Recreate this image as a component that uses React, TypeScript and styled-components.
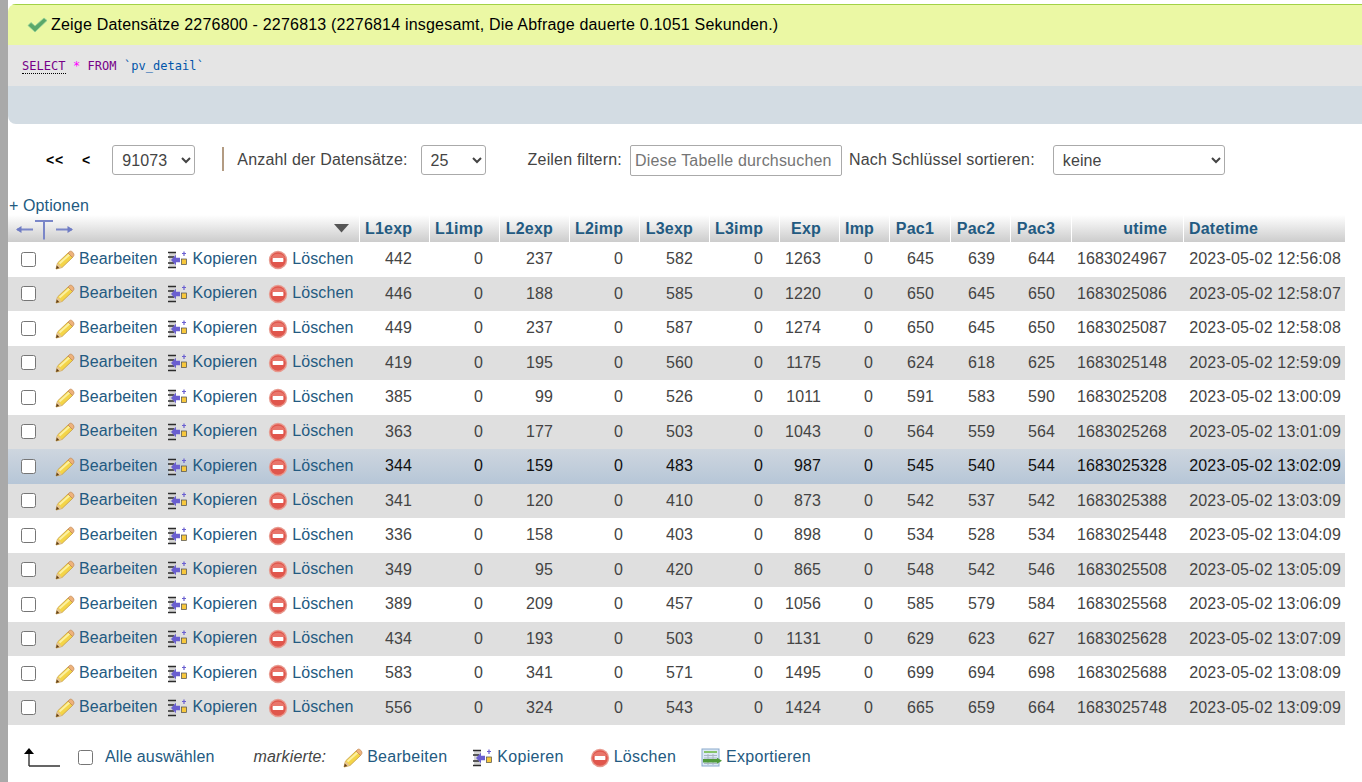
import React from 'react';
import styled, { createGlobalStyle } from 'styled-components';

const Global = createGlobalStyle`
  html, body { margin: 0; padding: 0; background: #fff; }
  body { font-family: "Liberation Sans", Arial, sans-serif; font-size: 16px; color: #444; overflow: hidden; }
`;

const Page = styled.div`
  width: 1362px; height: 782px; box-sizing: border-box; padding-left: 8px;
  background: #fff; position: relative; overflow: hidden;
  &::before { content: ""; position: absolute; left: 0; top: 0; bottom: 0; width: 8px; background: #a9a9a9; }
`;
const Panel = styled.div`
  margin-top: 4px; border-radius: 8px 0 0 8px; overflow: hidden; width: 1354px;
`;
const Success = styled.div`
  height: 40px; background: #ebf8a4; border-top: 1px solid #a2d246;
  display: flex; align-items: center; padding-left: 19px; gap: 3px; font-size: 16px; color: #000; letter-spacing: 0.2px;
`;
const Sql = styled.div`
  height: 41px; background: #e5e5e5; padding: 14px 0 0 14px; box-sizing: border-box;
  font-family: "DejaVu Sans Mono", monospace; font-size: 12px; line-height: 14px; color: #444; letter-spacing: 0.05px;
`;
const Kw = styled.span`color: #708;`;
const Dotted = styled(Kw)`border-bottom: 1px dotted #000;`;
const Star = styled.span`color: #f0f;`;
const Ident = styled.span`color: #05a;`;
const Tools = styled.div`height: 38px; background: #d3dce3;`;

const Nav = styled.div`
  height: 72px; display: flex; align-items: center; color: #444; letter-spacing: 0.18px;
`;
const Pager = styled.span`font-weight: 700; color: #000; font-size: 14px;`;
const First = styled(Pager)`margin-left: 38px; letter-spacing: 0.8px;`;
const Prev = styled(Pager)`margin-left: 18px;`;
const Select = styled.select<{ $w: number; $ml: number }>`
  width: ${p => p.$w}px; margin-left: ${p => p.$ml}px; height: 30px; font: 16px "Liberation Sans", Arial, sans-serif;
  color: #444; background-color: #fff; border: 1px solid #aaa; border-radius: 3px; padding: 0 0 0 5px; box-sizing: border-box;
  letter-spacing: 0.1px;
`;
const Divider = styled.span`width: 2px; height: 24px; background: #b39b82; margin: -3px 0 0 27px;`;
const Label = styled.span<{ $ml: number }>`margin-left: ${p => p.$ml}px; white-space: nowrap;`;
const Search = styled.input`
  width: 212px; height: 31px; margin: 1px 0 0 8px; box-sizing: border-box; padding: 0 4px; border: 1px solid #aaa; border-radius: 2px;
  font: 16px "Liberation Sans", Arial, sans-serif; color: #444; letter-spacing: 0.2px;
  &::placeholder { color: #757575; opacity: 1; }
`;
const Options = styled.div`height: 19px; line-height: 19px; padding-left: 1px; color: #235a81; font-size: 16px; letter-spacing: 0.12px;`;

const Table = styled.table`border-collapse: separate; border-spacing: 0; table-layout: fixed; width: 1337px; font-size: 16px;`;
const Th = styled.th<{ $align: string; $pr: number }>`
  height: 27px; padding: 0 ${p => p.$pr}px 0 5px; box-sizing: border-box; font-weight: 700; font-size: 16px; color: #235a81;
  background: linear-gradient(#fff, #ccc); text-align: ${p => p.$align}; border-left: 1px solid #fff; white-space: nowrap;
  letter-spacing: 0.2px;
`;
const HeadCtl = styled.th`
  height: 27px; padding: 0; background: linear-gradient(#fff, #ccc);
`;
const HeadInner = styled.div`display: flex; justify-content: space-between; align-items: center; padding: 0 10px 0 7px; height: 27px;`;
const Tr = styled.tr<{ $bg: string; $active: boolean }>`
  height: 34.5px; background: ${p => p.$bg}; color: ${p => (p.$active ? '#111' : '#444')};
`;
const Td = styled.td<{ $pr: number }>`
  padding: 0 ${p => p.$pr}px 0 5px; text-align: right; white-space: nowrap; box-sizing: border-box; letter-spacing: 0.1px;
`;
const DateTd = styled(Td)`letter-spacing: 0.17px;`;
const ActionCell = styled.td`padding: 0;`;
const Actions = styled.div`display: flex; align-items: center; height: 34px;`;
const Check = styled.span`
  width: 13px; height: 13px; border: 1px solid #767676; border-radius: 2.5px; background: #fff; display: inline-block; flex: none;
`;
const RowCheck = styled(Check)`margin: 0 19px 0 13px;`;
const Act = styled.span<{ $ml?: number }>`
  display: inline-flex; align-items: center; gap: 4px; color: #235a81; margin-left: ${p => p.$ml ?? 0}px; white-space: nowrap; margin-top: -1px;
  letter-spacing: 0.1px;
`;
const FootAct = styled(Act)`letter-spacing: 0.28px; margin-top: 0;`;
const IconBox = styled.svg`flex: none; display: block; margin-top: 2px;`;

const Foot = styled.div`height: 64px; display: flex; align-items: center; color: #235a81; letter-spacing: 0.14px;`;
const FootCheck = styled(Check)`margin-left: 16px;`;
const Arrow = styled.svg`margin-left: 16px; flex: none;`;
const SelectAll = styled.span`margin-left: 12px;`;
const Marked = styled.em`margin-left: 39px; color: #444;`;

const Pencil = () => (
  <IconBox width="20" height="20" viewBox="0 0 20 20">
    <path d="M1 19 L2.5 13 L13 3 L17.5 7.5 L7 17.5 Z" fill="#f4d548" stroke="#c9a24c" strokeWidth="0.9" />
    <path d="M4.5 13.5 L14.5 4.5" stroke="#fbf0a0" strokeWidth="2" />
    <path d="M13 3 L15 1.3 C16.6 0.4 19.6 3.6 18.8 5.6 L17.5 7.5 Z" fill="#eeb27c" stroke="#c48c54" strokeWidth="0.8" />
    <path d="M1 19 L2.5 13 L7 17.5 Z" fill="#e6c48e" />
    <path d="M1 19 L1.8 15.6 L4.2 18 Z" fill="#5f3d16" />
  </IconBox>
);
const Copy = () => (
  <IconBox width="20" height="20" viewBox="0 0 20 20">
    <rect x="1" y="2" width="7" height="16" fill="#d4d4d4" />
    <path d="M0 2.5 H8 M0 17.5 H8 M0 7 H6 M0 13 H6" stroke="#2c2c2c" strokeWidth="1.4" />
    <path d="M3 10 L8 4.8 V7.8 H12 V12.2 H8 V15.2 Z" fill="#6a5fd0" />
    <rect x="13.5" y="9" width="5" height="5.5" fill="#f8c83c" stroke="#4a4a4a" strokeWidth="0.7" />
    <path d="M16 1.5 V6 M14 3.5 H18" stroke="#6a5fd0" strokeWidth="1.2" />
  </IconBox>
);
const Del = () => (
  <IconBox width="20" height="20" viewBox="0 0 20 20">
    <circle cx="10" cy="10" r="9.2" fill="#e89a8f" />
    <circle cx="10" cy="10" r="7.8" fill="#e0564c" />
    <path d="M3 8 A7.8 7.8 0 0 1 17 8 Z" fill="#e8766b" />
    <rect x="4.6" y="8.1" width="10.8" height="3.8" rx="0.6" fill="#fff" />
  </IconBox>
);
const Exp = () => (
  <IconBox width="21" height="20" viewBox="0 0 21 20">
    <rect x="1" y="1" width="17" height="17" fill="#dce9f6" stroke="#8aa9cc" />
    <rect x="3" y="3" width="13" height="2" fill="#86c46b" />
    <path d="M3 7.5 H16 M3 10 H16 M3 15.5 H16 M7 6 V17 M12 6 V17" stroke="#a9b6c4" strokeWidth="1" />
    <path d="M2 11 H16 V14.5 H2 Z" fill="#4f9a3b" />
    <path d="M16 9.8 L21 12.8 L16 15.8 Z" fill="#4f9a3b" />
  </IconBox>
);

const rows: (string | number)[][] = [
  [442,0,237,0,582,0,1263,0,645,639,644,'1683024967','2023-05-02 12:56:08'],
  [446,0,188,0,585,0,1220,0,650,645,650,'1683025086','2023-05-02 12:58:07'],
  [449,0,237,0,587,0,1274,0,650,645,650,'1683025087','2023-05-02 12:58:08'],
  [419,0,195,0,560,0,1175,0,624,618,625,'1683025148','2023-05-02 12:59:09'],
  [385,0,99,0,526,0,1011,0,591,583,590,'1683025208','2023-05-02 13:00:09'],
  [363,0,177,0,503,0,1043,0,564,559,564,'1683025268','2023-05-02 13:01:09'],
  [344,0,159,0,483,0,987,0,545,540,544,'1683025328','2023-05-02 13:02:09'],
  [341,0,120,0,410,0,873,0,542,537,542,'1683025388','2023-05-02 13:03:09'],
  [336,0,158,0,403,0,898,0,534,528,534,'1683025448','2023-05-02 13:04:09'],
  [349,0,95,0,420,0,865,0,548,542,546,'1683025508','2023-05-02 13:05:09'],
  [389,0,209,0,457,0,1056,0,585,579,584,'1683025568','2023-05-02 13:06:09'],
  [434,0,193,0,503,0,1131,0,629,623,627,'1683025628','2023-05-02 13:07:09'],
  [583,0,341,0,571,0,1495,0,699,694,698,'1683025688','2023-05-02 13:08:09'],
  [556,0,324,0,543,0,1424,0,665,659,664,'1683025748','2023-05-02 13:09:09'],
];
const headers = ['L1exp','L1imp','L2exp','L2imp','L3exp','L3imp','Exp','Imp','Pac1','Pac2','Pac3','utime','Datetime'];
const widths = [351,70,70,70,70,70,70,60,50,61,60,61,112,162];
const pads = [17,16,16,16,16,16,18,16,16,15,16,16,4];

export default function App() {
  return (
    <Page>
      <Global />
      <Panel>
        <Success>
          <svg width="21" height="20" viewBox="0 0 21 20"><path d="M1 10.5 L4 7.5 L8 11 L17 3 L20 5.5 L8 17 Z" fill="#5aa86a" stroke="#8fcf98" strokeWidth="0.8" /></svg>
          <span>Zeige Datensätze 2276800 - 2276813 (2276814 insgesamt, Die Abfrage dauerte 0.1051 Sekunden.)</span>
        </Success>
        <Sql><Dotted>SELECT</Dotted> <Star>*</Star> <Kw>FROM</Kw> <Ident>`pv_detail`</Ident></Sql>
        <Tools />
      </Panel>
      <Nav>
        <First>&lt;&lt;</First>
        <Prev>&lt;</Prev>
        <Select $w={83} $ml={22}><option>91073</option></Select>
        <Divider />
        <Label $ml={13}>Anzahl der Datensätze:</Label>
        <Select $w={65} $ml={13}><option>25</option></Select>
        <Label $ml={42}>Zeilen filtern:</Label>
        <Search placeholder="Diese Tabelle durchsuchen" />
        <Label $ml={7}>Nach Schlüssel sortieren:</Label>
        <Select $w={172} $ml={18}><option>keine</option></Select>
      </Nav>
      <Options>+ Optionen</Options>
      <Table>
        <colgroup>{widths.map((w, i) => <col key={i} style={{ width: w }} />)}</colgroup>
        <thead>
          <tr>
            <HeadCtl>
              <HeadInner>
                <svg width="60" height="22" viewBox="0 0 60 22">
                  <path d="M2 11.5 H18 M41 11.5 H57 M20 3 H38 M29 3 V21.5" stroke="#7a86c8" strokeWidth="2" fill="none" />
                  <path d="M1 11.5 L6.5 8 V15 Z M58 11.5 L52.5 8 V15 Z" fill="#6f7cc4" />
                </svg>
                <svg width="15" height="9" viewBox="0 0 15 9"><path d="M0 0 H15 L7.5 8.5 Z" fill="#555" /></svg>
              </HeadInner>
            </HeadCtl>
            {headers.map((h, i) => <Th key={h} $pr={pads[i]} $align={h === 'Datetime' ? 'left' : 'right'}>{h}</Th>)}
          </tr>
        </thead>
        <tbody>
          {rows.map((r, i) => (
            <Tr key={i} $active={i === 6} $bg={i === 6 ? 'linear-gradient(#ced6df, #b6c6d7)' : i % 2 ? '#dfdfdf' : '#fff'}>
              <ActionCell>
                <Actions>
                  <RowCheck />
                  <Act><Pencil />Bearbeiten</Act>
                  <Act $ml={11}><Copy />Kopieren</Act>
                  <Act $ml={11}><Del />Löschen</Act>
                </Actions>
              </ActionCell>
              {r.map((v, j) => j === 12
                ? <DateTd key={j} $pr={pads[j]}>{v}</DateTd>
                : <Td key={j} $pr={pads[j]}>{v}</Td>)}
            </Tr>
          ))}
        </tbody>
      </Table>
      <Foot>
        <Arrow width="38" height="22" viewBox="0 0 38 22">
          <path d="M5 20 V6 M5 20 H36" stroke="#333" strokeWidth="1.4" fill="none" />
          <path d="M0 8 L5 2 L10 8 Z" fill="#000" />
        </Arrow>
        <FootCheck />
        <SelectAll>Alle auswählen</SelectAll>
        <Marked>markierte:</Marked>
        <FootAct $ml={17}><Pencil />Bearbeiten</FootAct>
        <FootAct $ml={26}><Copy />Kopieren</FootAct>
        <FootAct $ml={26}><Del />Löschen</FootAct>
        <FootAct $ml={25}><Exp />Exportieren</FootAct>
      </Foot>
    </Page>
  );
}
